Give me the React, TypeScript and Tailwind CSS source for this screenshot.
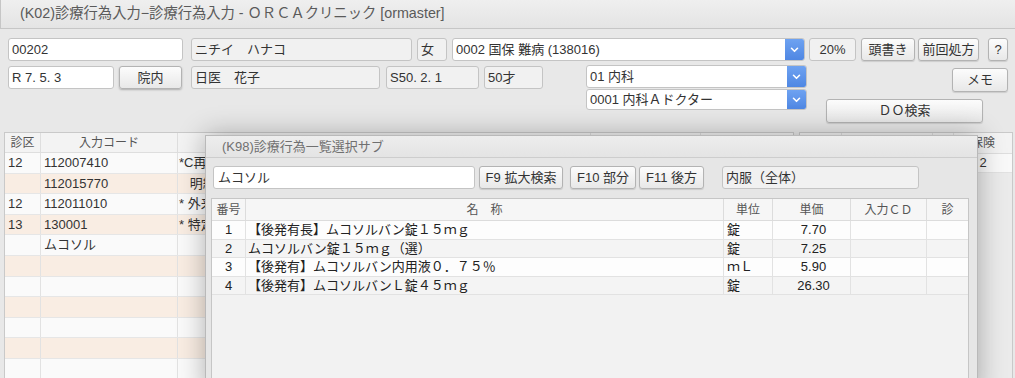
import React from "react";

const FONT = "font-['Liberation_Sans','Noto_Sans_CJK_JP',sans-serif]";

const box =
  "flex items-center h-[23px] border border-[#c4c4c4] rounded-[3px] px-[3px] text-[13px] text-[#333] whitespace-nowrap overflow-hidden";
const ro = "bg-[#f1f1f1]";
const btn =
  "flex items-center justify-center h-[23px] border border-[#b3b3b3] rounded-[3px] bg-linear-to-b from-[#fcfcfc] to-[#e8e8e8] text-[13px] text-[#333] whitespace-nowrap shadow-[0_1px_1px_rgba(0,0,0,0.12)]";

function Chevron() {
  return (
    <svg width="9" height="6" viewBox="0 0 9 6" fill="none">
      <path
        d="M1.5 1.3 L4.5 4.3 L7.5 1.3"
        stroke="white"
        strokeWidth="1.6"
        strokeLinecap="round"
        strokeLinejoin="round"
      />
    </svg>
  );
}

function Select({ className, text }: { className: string; text: string }) {
  return (
    <div className={`flex border border-[#c4c4c4] rounded-[3px] bg-white overflow-hidden ${className}`}>
      <div className="flex-1 flex items-center px-[3px] text-[13px] text-[#333] whitespace-nowrap">{text}</div>
      <div className="w-[19px] flex items-center justify-center bg-linear-to-b from-[#6ea2f1] to-[#4f87e3]">
        <Chevron />
      </div>
    </div>
  );
}

const mainRows = [
  { k: "12", code: "112007410", name: "*C再診料" },
  { k: "", code: "112015770", name: "   明細書発行体制等加算" },
  { k: "12", code: "112011010", name: "* 外来管理加算" },
  { k: "13", code: "130001", name: "* 特定疾患療養管理料" },
  { k: "", code: "ムコソル", name: "" },
  { k: "", code: "", name: "" },
  { k: "", code: "", name: "" },
  { k: "", code: "", name: "" },
  { k: "", code: "", name: "" },
  { k: "", code: "", name: "" },
  { k: "", code: "", name: "" },
];

const items = [
  { no: "1", name: "【後発有長】ムコソルバン錠１５ｍｇ", unit: "錠", price: "7.70" },
  { no: "2", name: "ムコソルバン錠１５ｍｇ（選）", unit: "錠", price: "7.25" },
  { no: "3", name: "【後発有】ムコソルバン内用液０．７５％", unit: "ｍＬ", price: "5.90" },
  { no: "4", name: "【後発有】ムコソルバンＬ錠４５ｍｇ", unit: "錠", price: "26.30" },
];

export default function App() {
  return (
    <div className={`relative w-[1015px] h-[378px] overflow-hidden bg-[#e8e8e8] ${FONT} text-[13px] text-[#333]`}>
      {/* window title */}
      <div className="h-[29px] flex items-center pl-[19px] border-l border-b border-[#c6c6c6] bg-linear-to-b from-[#efefef] to-[#e4e4e4] text-[14.3px] text-[#5a5a5a] whitespace-nowrap">
        (K02)診療行為入力−診療行為入力 - ＯＲＣＡクリニック [ormaster]
      </div>

      {/* patient form */}
      <div className="pl-[8px] pt-[9px]">
        <div className="flex h-[23px]">
          <div className={`${box} bg-white w-[175px]`}>00202</div>
          <div className={`${box} ${ro} w-[221px] ml-[8px]`}>ニチイ　ハナコ</div>
          <div className={`${box} ${ro} w-[30px] ml-[5px]`}>女</div>
          <Select className="w-[353px] h-[23px] ml-[5px]" text="0002 国保 難病 (138016)" />
          <div className={`${box} ${ro} w-[47px] ml-[4px] justify-center`}>20%</div>
          <div className={`${btn} w-[54px] ml-[5px]`}>頭書き</div>
          <div className={`${btn} w-[61px] ml-[3px]`}>前回処方</div>
          <div className={`${btn} w-[20px] ml-[9px]`}>?</div>
        </div>

        <div className="flex items-start mt-[4px]">
          <div className={`${box} bg-white w-[106px] mt-[1px]`}>R 7. 5. 3</div>
          <div className={`${btn} w-[63px] ml-[5px] mt-[1px] shadow-[0_1px_2px_rgba(0,0,0,0.25)]`}>院内</div>
          <div className={`${box} ${ro} w-[189px] ml-[9px] mt-[1px]`}>日医　花子</div>
          <div className={`${box} ${ro} w-[93px] ml-[6px] mt-[1px]`}>S50. 2. 1</div>
          <div className={`${box} ${ro} w-[59px] ml-[5px] mt-[1px]`}>50才</div>
          <div className="flex flex-col w-[221px] ml-[43px]">
            <Select className="h-[23px]" text="01 内科" />
            <Select className="h-[21px] mt-[1px]" text="0001 内科Ａドクター" />
          </div>
          <div className="flex flex-col w-[201px]">
            <div className={`${btn} w-[56px] h-[24px] mt-[3px] self-end`}>メモ</div>
            <div className={`${btn} w-[157px] h-[24px] ml-[19px] mt-[7px]`}>ＤＯ検索</div>
          </div>
        </div>
      </div>

      {/* main order table */}
      <div className="flex ml-[4px] mt-[9px]">
        <div className="w-[790px] border border-[#c9c9c9] bg-[#fafafa]">
          <div className="flex h-[20px] border-b border-[#dedede] bg-[#f3f3f3] text-[12px] text-[#555]">
            <div className="w-[36px] border-r border-[#dedede] flex items-center justify-center">診区</div>
            <div className="w-[137px] border-r border-[#dedede] flex items-center justify-center">入力コード</div>
            <div className="w-[413px] border-r border-[#dedede] flex items-center justify-center">名　称</div>
            <div className="w-[110px] border-r border-[#dedede] flex items-center justify-center">数量・点数</div>
            <div className="flex-1" />
          </div>
          {mainRows.map((r, i) => (
            <div
              key={i}
              className={`flex h-[20.6px] border-b border-[#e6e6e6] ${i % 2 === 1 ? "bg-[#f9ede3]" : "bg-[#fafafa]"}`}
            >
              <div className="w-[36px] border-r border-[#e2e2e2] flex items-center pl-[3px]">{r.k}</div>
              <div className="w-[137px] border-r border-[#e2e2e2] flex items-center pl-[3px]">{r.code}</div>
              <div className="w-[413px] border-r border-[#e2e2e2] flex items-center pl-[1px] whitespace-pre">{r.name}</div>
              <div className="w-[110px] border-r border-[#e2e2e2]" />
              <div className="flex-1" />
            </div>
          ))}
        </div>

        <div className="w-[214px] h-[260px] ml-[5px] border border-[#c9c9c9] bg-[#ebebeb]">
          <div className="flex h-[21px] border-b border-[#dedede] bg-[#f3f3f3] text-[12px] text-[#555]">
            <div className="w-[42px] border-r border-[#dedede]" />
            <div className="w-[91px] border-r border-[#dedede]" />
            <div className="w-[21px] border-r border-[#dedede]" />
            <div className="flex-1 flex items-center justify-center">保険</div>
          </div>
          <div className="flex h-[19px] border-b border-[#e2e2e2] bg-[#f9f9f9]">
            <div className="w-[42px] border-r border-[#e2e2e2]" />
            <div className="w-[91px] border-r border-[#e2e2e2]" />
            <div className="w-[21px] border-r border-[#e2e2e2]" />
            <div className="flex-1 flex items-center justify-center">2</div>
          </div>
        </div>
      </div>

      {/* selection sub-window */}
      <div className="absolute left-[205px] top-[135px] w-[773px] h-[260px] border border-[#b9b9b9] bg-[#e6e6e6] shadow-[0_0_26px_rgba(0,0,0,0.3)]">
        <div className="h-[22px] flex items-center pl-[16px] border-b border-[#cdcdcd] bg-linear-to-b from-[#ededed] to-[#e4e4e4] text-[13px] text-[#707070]">
          (K98)診療行為一覧選択サブ
        </div>
        <div className="flex pl-[7px] mt-[8px]">
          <div className={`${box} bg-white w-[262px] pl-[4px]`}>ムコソル</div>
          <div className={`${btn} w-[84px] ml-[4px]`}>F9 拡大検索</div>
          <div className={`${btn} w-[66px] ml-[7px]`}>F10 部分</div>
          <div className={`${btn} w-[65px] ml-[3px]`}>F11 後方</div>
          <div className={`${box} ${ro} w-[197px] ml-[18px]`}>内服（全体）</div>
        </div>
        <div className="ml-[5px] mt-[9px] w-[758px] h-[200px] border border-[#c6c6c6] bg-[#f2f2f2]">
          <div className="flex h-[22px] border-b border-[#dcdcdc] bg-[#f6f6f6] text-[12px] text-[#555]">
            <div className="w-[34px] border-r border-[#dcdcdc] flex items-center justify-center">番号</div>
            <div className="w-[478px] border-r border-[#dcdcdc] flex items-center justify-center">名　称</div>
            <div className="w-[49px] border-r border-[#dcdcdc] flex items-center justify-center">単位</div>
            <div className="w-[78px] border-r border-[#dcdcdc] flex items-center justify-center">単価</div>
            <div className="w-[76px] border-r border-[#dcdcdc] flex items-center justify-center">入力ＣＤ</div>
            <div className="flex-1 flex items-center justify-center">診</div>
          </div>
          {items.map((it, i) => (
            <div
              key={it.no}
              className={`flex h-[18.6px] border-b border-[#e2e2e2] text-[13px] text-[#222] ${i % 2 === 1 ? "bg-[#f4f4f4]" : "bg-[#fdfdfd]"}`}
            >
              <div className="w-[34px] border-r border-[#e2e2e2] flex items-center justify-center">{it.no}</div>
              <div className="w-[478px] border-r border-[#e2e2e2] flex items-center pl-[2px] whitespace-nowrap">{it.name}</div>
              <div className="w-[49px] border-r border-[#e2e2e2] flex items-center pl-[3px]">{it.unit}</div>
              <div className="w-[78px] border-r border-[#e2e2e2] flex items-center justify-center pl-[4px]">{it.price}</div>
              <div className="w-[76px] border-r border-[#e2e2e2]" />
              <div className="flex-1" />
            </div>
          ))}
        </div>
      </div>
    </div>
  );
}
